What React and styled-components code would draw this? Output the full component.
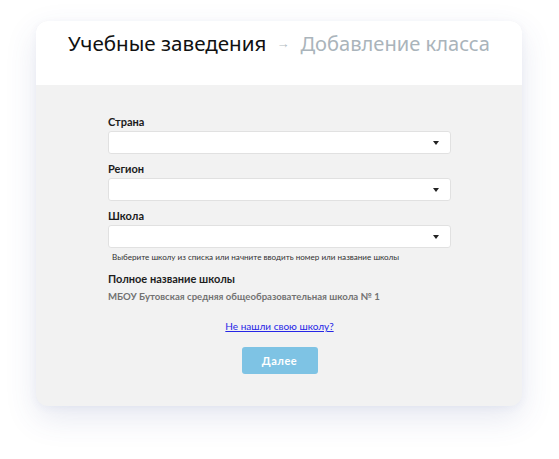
import React from "react";
import styled, { createGlobalStyle } from "styled-components";

const Global = createGlobalStyle`
  html, body { margin: 0; padding: 0; background: #ffffff; }
  body { font-family: "Noto Sans", "Open Sans", sans-serif; }
`;

const Page = styled.div`
  width: 559px;
  height: 459px;
  box-sizing: border-box;
  padding: 21px 0 0 36px;
`;

const Card = styled.div`
  width: 486px;
  height: 385px;
  border-radius: 12px;
  overflow: hidden;
  background: #f2f2f2;
  box-shadow: 0 12px 32px rgba(60, 80, 150, 0.13), 0 2px 8px rgba(60, 80, 150, 0.05);
  display: flex;
  flex-direction: column;
`;

const Header = styled.div`
  height: 64px;
  background: #ffffff;
  box-sizing: border-box;
  padding: 9px 0 0 32px;
  font-size: 20.6px;
  line-height: 26px;
  white-space: nowrap;
`;

const Crumb = styled.span`
  color: ${(p) => (p.$muted ? "#aab4bb" : "#111111")};
  font-size: ${(p) => (p.$muted ? "20.1px" : "20.6px")};
`;

const Arrow = styled.span`
  display: inline-block;
  color: #b3bcc2;
  font-size: 13px;
  margin: 0 11px 0 10px;
  transform: translateY(-3px);
`;

const Body = styled.div`
  flex: 1;
  box-sizing: border-box;
  padding: 30px 71px 0 72px;
  display: flex;
  flex-direction: column;
`;

const Label = styled.div`
  font-family: "Lato", "Noto Sans", sans-serif;
  font-weight: 700;
  font-size: 11px;
  line-height: 14px;
  color: #1b1b1b;
  margin: ${(p) => (p.$first ? "0" : "8px")} 0 2px;
`;

const Select = styled.div`
  height: 23px;
  box-sizing: border-box;
  background: #ffffff;
  border: 1px solid #e1e1e1;
  border-radius: 3px;
  display: flex;
  align-items: center;
  justify-content: flex-end;
  padding-right: 11px;
`;

const Caret = styled.span`
  width: 0;
  height: 0;
  border-left: 3.5px solid transparent;
  border-right: 3.5px solid transparent;
  border-top: 4px solid #222;
`;

const Hint = styled.div`
  font-family: "Lato", "Noto Sans", sans-serif;
  font-size: 8.1px;
  line-height: 10px;
  color: #333;
  margin: 4px 0 0 4px;
  white-space: nowrap;
`;

const FullTitle = styled.div`
  font-family: "Lato", "Noto Sans", sans-serif;
  font-weight: 700;
  font-size: 11px;
  line-height: 15px;
  color: #1e1e1e;
  margin-top: 9px;
`;

const SchoolName = styled.div`
  font-family: "Lato", "Noto Sans", sans-serif;
  font-weight: 700;
  font-size: 9.6px;
  line-height: 12px;
  color: #727272;
  margin-top: 5px;
  white-space: nowrap;
`;

const Link = styled.a`
  align-self: center;
  font-family: "Lato", "Noto Sans", sans-serif;
  font-size: 10px;
  line-height: 14px;
  color: #2626e6;
  text-decoration: underline;
  margin-top: 16px;
  cursor: pointer;
`;

const Button = styled.button`
  align-self: center;
  width: 76px;
  height: 27px;
  margin-top: 14px;
  border: none;
  border-radius: 3px;
  background: #7ec3e4;
  color: #ffffff;
  font-family: "Lato", "Noto Sans", sans-serif;
  font-weight: 700;
  font-size: 11px;
  letter-spacing: 0.5px;
  padding: 0;
`;

const fields = ["Страна", "Регион", "Школа"];

export default function App() {
  return (
    <>
      <Global />
      <Page>
        <Card>
          <Header>
            <Crumb>Учебные заведения</Crumb>
            <Arrow>→</Arrow>
            <Crumb $muted>Добавление класса</Crumb>
          </Header>
          <Body>
            {fields.map((f, i) => (
              <React.Fragment key={f}>
                <Label $first={i === 0}>{f}</Label>
                <Select>
                  <Caret />
                </Select>
              </React.Fragment>
            ))}
            <Hint>Выберите школу из списка или начните вводить номер или название школы</Hint>
            <FullTitle>Полное название школы</FullTitle>
            <SchoolName>МБОУ Бутовская средняя общеобразовательная школа № 1</SchoolName>
            <Link>Не нашли свою школу?</Link>
            <Button>Далее</Button>
          </Body>
        </Card>
      </Page>
    </>
  );
}
